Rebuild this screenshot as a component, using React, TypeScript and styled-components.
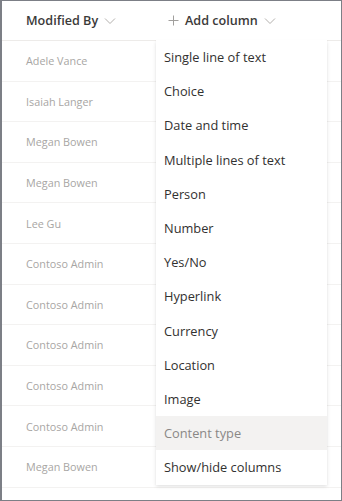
import styled, { createGlobalStyle } from "styled-components";

const GlobalStyle = createGlobalStyle`
  html, body {
    margin: 0;
    padding: 0;
    background: #ffffff;
  }
  * {
    box-sizing: border-box;
  }
`;

const people = [
  "Adele Vance",
  "Isaiah Langer",
  "Megan Bowen",
  "Megan Bowen",
  "Lee Gu",
  "Contoso Admin",
  "Contoso Admin",
  "Contoso Admin",
  "Contoso Admin",
  "Contoso Admin",
  "Megan Bowen",
];

const columnTypes = [
  "Single line of text",
  "Choice",
  "Date and time",
  "Multiple lines of text",
  "Person",
  "Number",
  "Yes/No",
  "Hyperlink",
  "Currency",
  "Location",
  "Image",
  "Content type",
  "Show/hide columns",
];

function Chevron() {
  return (
    <ChevronIcon width="12" height="8" viewBox="0 0 12 8">
      <path d="M1 1.5 L6 6.5 L11 1.5" fill="none" stroke="#b3b0ad" strokeWidth="1" />
    </ChevronIcon>
  );
}

export default function App() {
  return (
    <>
      <GlobalStyle />
      <Frame>
        <HeaderRow>
          <HeaderCell>
            Modified By
            <Chevron />
          </HeaderCell>
          <AddColumn>
            <PlusIcon width="11" height="11" viewBox="0 0 11 11">
              <path d="M5.5 0.5 V10.5 M0.5 5.5 H10.5" stroke="#a19f9d" strokeWidth="1" />
            </PlusIcon>
            Add column
            <Chevron />
          </AddColumn>
        </HeaderRow>
        {people.map((name, i) => (
          <Row key={i}>
            <NameCell>{name}</NameCell>
          </Row>
        ))}
        <Menu>
          {columnTypes.map((label) => (
            <MenuItem key={label} $active={label === "Content type"}>
              {label}
            </MenuItem>
          ))}
        </Menu>
      </Frame>
    </>
  );
}

const Frame = styled.div`
  position: relative;
  width: 342px;
  height: 501px;
  border: 1px solid #7c7f86;
  border-left-width: 2px;
  overflow: hidden;
  font-family: "Open Sans", "Noto Sans", sans-serif;
  background: #ffffff;
`;

const HeaderRow = styled.div`
  display: flex;
  align-items: center;
  height: 40px;
  padding-left: 24px;
  border-bottom: 1px solid #edebe9;
`;

const HeaderCell = styled.div`
  display: flex;
  align-items: center;
  gap: 6px;
  width: 142px;
  font-size: 12.6px;
  font-weight: 600;
  color: #3b3a39;
`;

const AddColumn = styled(HeaderCell)`
  width: auto;
`;

const ChevronIcon = styled.svg`
  display: block;
  margin-top: 1px;
`;

const PlusIcon = styled.svg`
  display: block;
  margin-right: 0;
`;

const Row = styled.div`
  display: flex;
  align-items: center;
  height: 40.6px;
  padding-left: 24px;
  border-bottom: 1px solid #f3f2f1;
`;

const NameCell = styled.span`
  font-size: 10.8px;
  color: #a8a6a4;
`;

const Menu = styled.div`
  position: absolute;
  left: 154px;
  top: 39px;
  width: 171px;
  padding-bottom: 1px;
  background: #ffffff;
  box-shadow: 0 1.6px 3.6px rgba(0, 0, 0, 0.13), 0 0.3px 0.9px rgba(0, 0, 0, 0.11);
`;

const MenuItem = styled.div<{ $active?: boolean }>`
  display: flex;
  align-items: center;
  height: 34.2px;
  padding-left: 8px;
  font-size: 12.8px;
  color: ${(p) => (p.$active ? "#8a8886" : "#323130")};
  background: ${(p) => (p.$active ? "#f3f2f1" : "transparent")};
`;
